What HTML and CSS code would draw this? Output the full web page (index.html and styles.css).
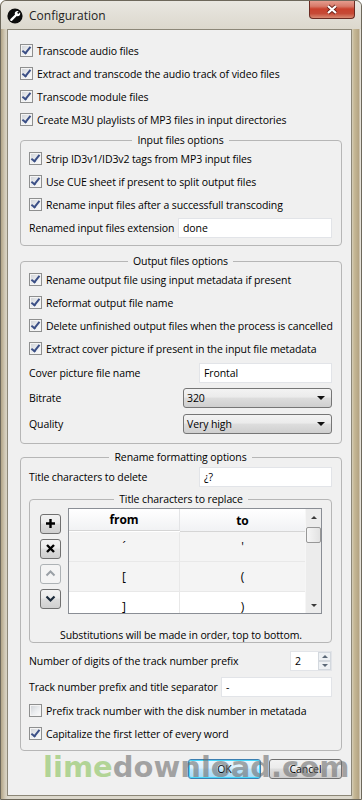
FILE: index.html
```html
<!DOCTYPE html>
<html lang="en">
<head>
  <meta charset="UTF-8">
  <meta name="viewport" content="width=device-width, initial-scale=1.0">
  <title>Configuration</title>

  <!-- CSS Styling -->
  <link rel="stylesheet" href="styles.css">
</head>
<body>

  <div class="window">

    <!-- Title bar -->
    <div class="titlebar">
      <svg class="app-icon" width="16" height="16" viewBox="0 0 16 16">
        <circle cx="8" cy="8" r="7.6" fill="#0d0d0d"/>
        <path d="M4.3 11.9 L9.4 6.8" stroke="#fff" stroke-width="2.3" stroke-linecap="round"/>
        <circle cx="10.5" cy="5.6" r="2.7" fill="#fff"/>
        <path d="M10.7 5.4 L13.2 2.9" stroke="#0d0d0d" stroke-width="1.7"/>
      </svg>
      <span class="title">Configuration</span>
      <span class="close-btn">
        <svg width="14" height="11" viewBox="0 0 14 11">
          <path d="M3 2 L11 9 M11 2 L3 9" stroke="#6a231a" stroke-width="3.8"/>
          <path d="M3 2 L11 9 M11 2 L3 9" stroke="#ffffff" stroke-width="2.2"/>
        </svg>
      </span>
    </div>

    <!-- Dialog content -->
    <div class="client">
      <div class="check-row"><span class="box on"></span>Transcode audio files</div>
      <div class="check-row"><span class="box on"></span>Extract and transcode the audio track of video files</div>
      <div class="check-row"><span class="box on"></span>Transcode module files</div>
      <div class="check-row"><span class="box on"></span>Create M3U playlists of MP3 files in input directories</div>

      <!-- Input files -->
      <fieldset class="group group-input">
        <legend>Input files options</legend>
        <div class="check-row"><span class="box on"></span>Strip ID3v1/ID3v2 tags from MP3 input files</div>
        <div class="check-row"><span class="box on"></span>Use CUE sheet if present to split output files</div>
        <div class="check-row"><span class="box on"></span>Rename input files after a successfull transcoding</div>
        <div class="field-row h23">
          <span>Renamed input files extension</span>
          <span class="textbox ext-box">done</span>
        </div>
      </fieldset>

      <!-- Output files -->
      <fieldset class="group group-output">
        <legend>Output files options</legend>
        <div class="check-row"><span class="box on"></span>Rename output file using input metadata if present</div>
        <div class="check-row"><span class="box on"></span>Reformat output file name</div>
        <div class="check-row"><span class="box on"></span>Delete unfinished output files when the process is cancelled</div>
        <div class="check-row"><span class="box on"></span>Extract cover picture if present in the input file metadata</div>
        <div class="field-row h25">
          <span>Cover picture file name</span>
          <span class="textbox name-box">Frontal</span>
        </div>
        <div class="field-row">
          <span>Bitrate</span>
          <span class="combo">320</span>
        </div>
        <div class="field-row">
          <span>Quality</span>
          <span class="combo">Very high</span>
        </div>
      </fieldset>

      <!-- Rename formatting -->
      <fieldset class="group group-rename">
        <legend>Rename formatting options</legend>
        <div class="field-row h25">
          <span>Title characters to delete</span>
          <span class="textbox name-box">¿?</span>
        </div>

        <fieldset class="group group-replace">
          <legend>Title characters to replace</legend>
          <div class="subst">
            <div class="tool-col">
              <span class="tool-btn">
                <svg width="11" height="11" viewBox="0 0 11 11"><path d="M5.5 1 V10 M1 5.5 H10" stroke="#000" stroke-width="2.4"/></svg>
              </span>
              <span class="tool-btn">
                <svg width="11" height="11" viewBox="0 0 11 11"><path d="M2 2 L9 9 M9 2 L2 9" stroke="#000" stroke-width="2.4"/></svg>
              </span>
              <span class="tool-btn disabled">
                <svg width="11" height="11" viewBox="0 0 11 11"><path d="M1.5 7.5 L5.5 3.5 L9.5 7.5" stroke="#9aa0a6" stroke-width="2" fill="none"/></svg>
              </span>
              <span class="tool-btn">
                <svg width="11" height="11" viewBox="0 0 11 11"><path d="M1.5 3.5 L5.5 7.5 L9.5 3.5" stroke="#1b2a3a" stroke-width="2.2" fill="none"/></svg>
              </span>
            </div>

            <div class="table-frame">
              <div class="grid">
                <div class="t-head"><span>from</span><span>to</span></div>
                <div class="t-row alt"><span>´</span><span>'</span></div>
                <div class="t-row alt"><span>[</span><span>(</span></div>
                <div class="t-row"><span>]</span><span>)</span></div>
              </div>
              <div class="vscroll">
                <span class="vs-up"></span>
                <span class="vs-thumb"></span>
                <span class="vs-space"></span>
                <span class="vs-down"></span>
              </div>
            </div>
          </div>
          <p class="hint">Substitutions will be made in order, top to bottom.</p>
        </fieldset>

        <div class="field-row digits-row">
          <span>Number of digits of the track number prefix</span>
          <span class="spinbox">
            <span class="spin-val">2</span>
            <span class="spin-arrows"><span class="spin-up"></span><span class="spin-down"></span></span>
          </span>
        </div>
        <div class="field-row h25">
          <span>Track number prefix and title separator</span>
          <span class="textbox sep-box">-</span>
        </div>
        <div class="check-row"><span class="box"></span>Prefix track number with the disk number in metatada</div>
        <div class="check-row"><span class="box on"></span>Capitalize the first letter of every word</div>
      </fieldset>

      <!-- Dialog buttons -->
      <div class="dialog-buttons">
        <span class="btn btn-default">OK</span>
        <span class="btn">Cancel</span>
      </div>
    </div>

    <!-- Download site watermark -->
    <div class="watermark"><span class="wm-lime">lime</span><span class="wm-rest">download.com</span></div>
  </div>

</body>
</html>
```

FILE: styles.css
```css
/* Page */
body {
  margin: 0;
  background: #ffffff;
  font-family: "Open Sans", "Noto Sans", sans-serif;
  font-size: 10.5px;
  letter-spacing: -0.1px;
  color: #000;
}

/* Window frame */
.window {
  position: relative;
  width: 362px;
  height: 800px;
  box-sizing: border-box;
  border: 1px solid #6d685b;
  border-radius: 6px 6px 0 0;
  background: linear-gradient(to right, #b3a587 0, #d3cbb8 4px, #dcd8cc 7px, #dcd8cc 350px, #c7b996 353px, #b3a382 358px, #e4e0d6 359px);
  display: flex;
  flex-direction: column;
  overflow: hidden;
}

.titlebar {
  height: 28px;
  flex: none;
  display: flex;
  align-items: center;
  background: linear-gradient(#e9e7e1, #dcd8cd);
  border-radius: 5px 5px 0 0;
}

.app-icon {
  margin: 2px 6px 0 6px;
}

.title {
  font-size: 12px;
  letter-spacing: 0;
  color: #1e1e1e;
  margin-top: 1px;
}

.close-btn {
  align-self: flex-start;
  margin-left: auto;
  margin-right: 6px;
  margin-top: -1px;
  width: 46px;
  height: 19px;
  box-sizing: border-box;
  border: 1px solid #6b2b22;
  border-top: none;
  border-radius: 0 0 4px 4px;
  background: linear-gradient(#e8a395 0%, #d77a69 35%, #c9412d 50%, #c64a36 75%, #d88a72 100%);
  display: flex;
  align-items: center;
  justify-content: center;
}

/* Client area */
.client {
  flex: 1;
  margin: 0 9px 3px 6px;
  padding: 9px 9px 0 12px;
  border: 1px solid #8c8778;
  background: #f0f0f0;
}

/* Checkboxes */
.check-row {
  height: 23px;
  display: flex;
  align-items: center;
  white-space: nowrap;
}

.box {
  position: relative;
  flex: none;
  width: 13px;
  height: 13px;
  box-sizing: border-box;
  margin-right: 4px;
  border: 1px solid #8e8f8f;
  background: linear-gradient(135deg, #cdd0d5 0%, #eceef0 55%, #fbfbfb 100%);
  box-shadow: inset 0 0 0 1px #f4f4f4;
}

.box.on::after {
  content: "";
  position: absolute;
  left: 3px;
  top: 0;
  width: 3px;
  height: 7px;
  border: solid #3b4f86;
  border-width: 0 2px 2px 0;
  transform: rotate(38deg);
}

/* Group boxes */
.group {
  margin: 0;
  min-width: 0;
  padding: 0 9px 6px 8px;
  border: 1px solid #b6b6b6;
  border-radius: 4px;
}

.group legend {
  margin: 0 auto;
  padding: 0 5px;
  line-height: 14px;
}

.group-input {
  margin-top: 2px;
}

.group-output {
  margin-top: 8px;
}

.group-rename {
  margin-top: 6px;
  padding-bottom: 5px;
}

.group-replace {
  margin-top: 3px;
  padding: 0 9px 0 10px;
}

/* Label + field rows */
.field-row {
  height: 26px;
  display: flex;
  align-items: center;
  justify-content: space-between;
  white-space: nowrap;
}

.field-row.h23 {
  height: 23px;
}

.field-row.h25 {
  height: 25px;
}

.textbox {
  height: 20px;
  box-sizing: border-box;
  padding-left: 4px;
  line-height: 18px;
  background: #fff;
  border: 1px solid #e2e4e8;
}

.ext-box {
  width: 154px;
}

.name-box {
  width: 133px;
}

.sep-box {
  width: 111px;
}

.combo {
  width: 149px;
  height: 20px;
  box-sizing: border-box;
  padding-left: 3px;
  display: flex;
  align-items: center;
  border: 1px solid #767676;
  border-radius: 3px;
  background: linear-gradient(#f3f3f3 0%, #ebebeb 45%, #dddddd 50%, #cfcfcf 100%);
}

.combo::after {
  content: "";
  margin-left: auto;
  margin-right: 6px;
  border-left: 4px solid transparent;
  border-right: 4px solid transparent;
  border-top: 4px solid #111;
}

.spinbox {
  width: 42px;
  height: 20px;
  box-sizing: border-box;
  display: flex;
  background: #fff;
  border: 1px solid #e2e4e8;
}

.spin-val {
  flex: 1;
  padding-left: 4px;
  line-height: 18px;
}

.spin-arrows {
  width: 13px;
  display: flex;
  flex-direction: column;
}

.spin-up,
.spin-down {
  flex: 1;
  display: flex;
  align-items: center;
  justify-content: center;
  background: #eef1f4;
  border: 1px solid #d3d8de;
}

.spin-up::before {
  content: "";
  border-left: 3px solid transparent;
  border-right: 3px solid transparent;
  border-bottom: 3px solid #5b6877;
}

.spin-down::before {
  content: "";
  border-left: 3px solid transparent;
  border-right: 3px solid transparent;
  border-top: 3px solid #5b6877;
}

/* Substitution table */
.digits-row {
  margin-top: 5px;
}

.subst {
  margin-top: 2px;
  display: flex;
  align-items: center;
  gap: 7px;
}

.tool-col {
  display: flex;
  flex-direction: column;
  gap: 5px;
}

.tool-btn {
  width: 21px;
  height: 20px;
  box-sizing: border-box;
  display: flex;
  align-items: center;
  justify-content: center;
  border: 1px solid #707070;
  border-radius: 3px;
  background: linear-gradient(#f2f2f2 0%, #ebebeb 45%, #dddddd 50%, #cfcfcf 100%);
}

.tool-btn.disabled {
  border-color: #adb2b5;
  background: #f4f4f4;
}

.table-frame {
  width: 255px;
  height: 106px;
  box-sizing: border-box;
  display: flex;
  border: 1px solid #8a8e95;
  background: #fff;
  overflow: hidden;
}

.grid {
  width: 236px;
  flex: none;
}

.t-head,
.t-row {
  display: grid;
  grid-template-columns: 111px 125px;
}

.t-head span,
.t-row span {
  display: flex;
  align-items: center;
  justify-content: center;
}

.t-head span {
  height: 22px;
  font-size: 12px;
  font-weight: bold;
  background: linear-gradient(#ffffff, #f1f2f4);
  border-bottom: 1px solid #d5d5d5;
}

.t-head span:first-child {
  box-sizing: border-box;
  border-right: 1px solid #e3e4e6;
}

.t-row span {
  height: 29px;
  font-size: 12px;
  border-bottom: 1px solid #e8e8e8;
}

.t-row span:first-child {
  border-right: 1px solid #e8e8e8;
}

.t-row.alt span {
  background: #f4f4f4;
}

.vscroll {
  flex: 1;
  display: flex;
  flex-direction: column;
  align-items: center;
  background: #ececec;
  border-left: 1px solid #f6f6f6;
}

.vs-up,
.vs-down {
  height: 16px;
  display: flex;
  align-items: center;
  justify-content: center;
}

.vs-up::before {
  content: "";
  border-left: 3px solid transparent;
  border-right: 3px solid transparent;
  border-bottom: 3px solid #3a3a3a;
}

.vs-down::before {
  content: "";
  border-left: 3px solid transparent;
  border-right: 3px solid transparent;
  border-top: 3px solid #3a3a3a;
}

.vs-thumb {
  width: 15px;
  height: 16px;
  margin-top: 2px;
  box-sizing: border-box;
  border: 1px solid #979797;
  border-radius: 2px;
  background: linear-gradient(to right, #f6f6f6, #e2e2e2);
}

.vs-space {
  flex: 1;
}

.hint {
  margin: 14px 0 0;
  line-height: 14px;
  text-align: center;
  white-space: nowrap;
}

/* OK / Cancel */
.dialog-buttons {
  margin-top: 8px;
  display: flex;
  justify-content: flex-end;
  gap: 8px;
}

.btn {
  width: 73px;
  height: 20px;
  box-sizing: border-box;
  display: flex;
  align-items: center;
  justify-content: center;
  border: 1px solid #707070;
  border-radius: 3px;
  background: linear-gradient(#f2f2f2 0%, #ebebeb 45%, #dddddd 50%, #cfcfcf 100%);
}

.btn-default {
  border-color: #3c7fb1;
  box-shadow: inset 0 0 0 1px #48d8fb;
  background: linear-gradient(#eaf6fd 0%, #d9f0fc 45%, #bee6fd 50%, #a7d9f5 100%);
}

/* Watermark */
.watermark {
  position: absolute;
  left: 42px;
  top: 752px;
  font-family: "DejaVu Sans", sans-serif;
  font-weight: bold;
  font-size: 29px;
  line-height: 29px;
  letter-spacing: 0;
  white-space: nowrap;
  pointer-events: none;
}

.wm-lime {
  color: rgba(150, 200, 110, 0.7);
}

.wm-rest {
  color: rgba(110, 110, 110, 0.6);
}
```
